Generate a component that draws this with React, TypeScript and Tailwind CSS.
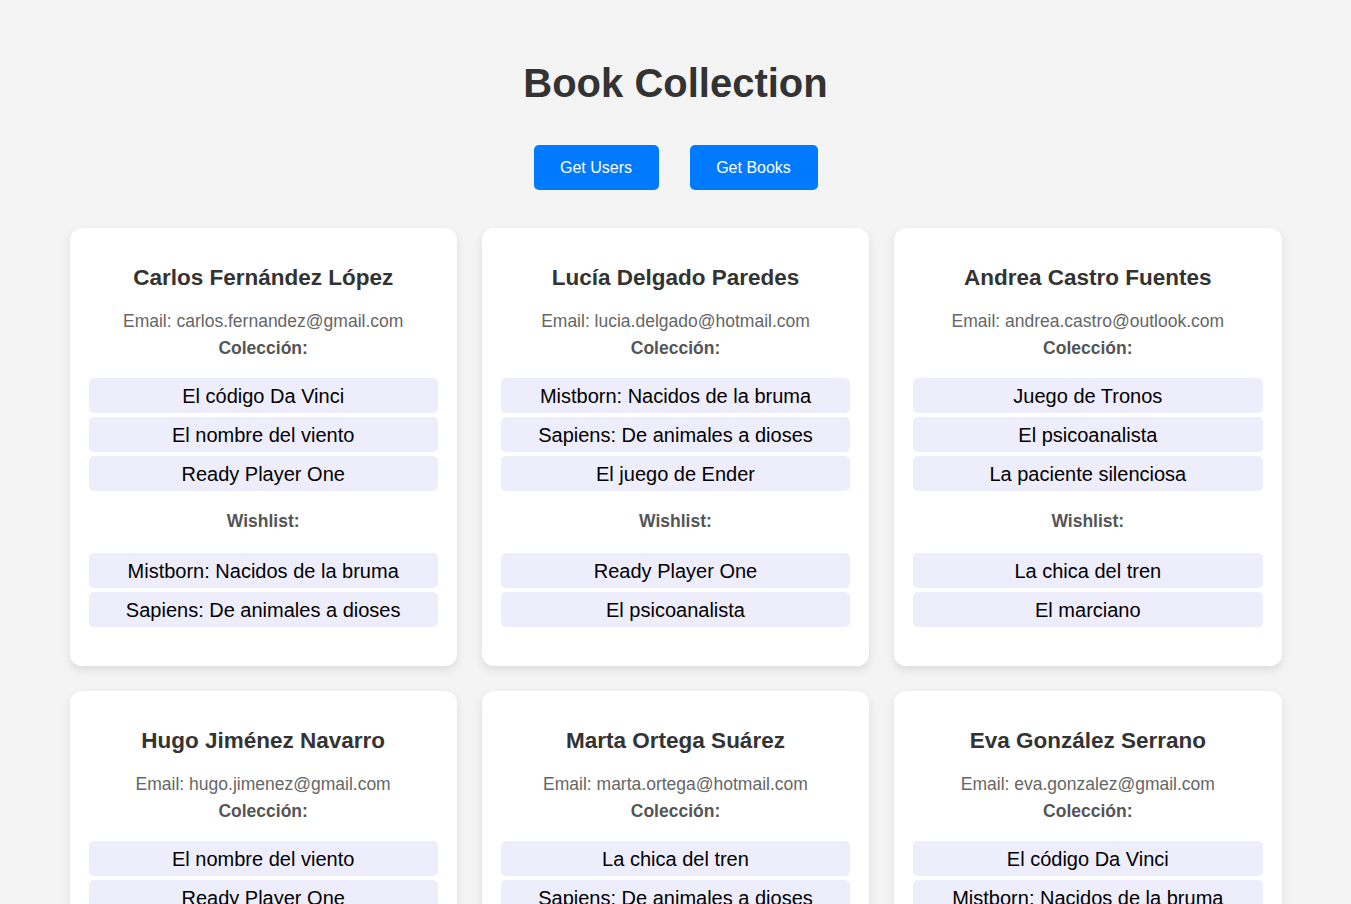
const users = [
  {
    name: "Carlos Fernández López",
    email: "carlos.fernandez@gmail.com",
    collection: ["El código Da Vinci", "El nombre del viento", "Ready Player One"],
    wishlist: ["Mistborn: Nacidos de la bruma", "Sapiens: De animales a dioses"],
  },
  {
    name: "Lucía Delgado Paredes",
    email: "lucia.delgado@hotmail.com",
    collection: ["Mistborn: Nacidos de la bruma", "Sapiens: De animales a dioses", "El juego de Ender"],
    wishlist: ["Ready Player One", "El psicoanalista"],
  },
  {
    name: "Andrea Castro Fuentes",
    email: "andrea.castro@outlook.com",
    collection: ["Juego de Tronos", "El psicoanalista", "La paciente silenciosa"],
    wishlist: ["La chica del tren", "El marciano"],
  },
  {
    name: "Hugo Jiménez Navarro",
    email: "hugo.jimenez@gmail.com",
    collection: ["El nombre del viento", "Ready Player One", "El marciano"],
    wishlist: ["Juego de Tronos", "El juego de Ender"],
  },
  {
    name: "Marta Ortega Suárez",
    email: "marta.ortega@hotmail.com",
    collection: ["La chica del tren", "Sapiens: De animales a dioses", "El código Da Vinci"],
    wishlist: ["La paciente silenciosa", "El nombre del viento"],
  },
  {
    name: "Eva González Serrano",
    email: "eva.gonzalez@gmail.com",
    collection: ["El código Da Vinci", "Mistborn: Nacidos de la bruma", "El psicoanalista"],
    wishlist: ["Ready Player One", "La chica del tren"],
  },
];

const BookList = ({ books }: { books: string[] }) => (
  <ul className="flex flex-col gap-[4px]">
    {books.map((b) => (
      <li
        key={b}
        className="h-[35px] flex items-center justify-center rounded-[5px] bg-[#eeedfc] text-[20px] text-black"
      >
        {b}
      </li>
    ))}
  </ul>
);

const UserCard = ({ user }: { user: (typeof users)[number] }) => (
  <div className="bg-white rounded-[12px] shadow-[0_4px_10px_rgba(0,0,0,0.1)] px-[19px] pt-[37px] pb-[39px] text-center">
    <h2 className="text-[22.5px] leading-[26px] font-bold text-[#333]">{user.name}</h2>
    <p className="mt-[20px] text-[17.5px] leading-[20px] text-[#666]">Email: {user.email}</p>
    <p className="mt-[7px] text-[17.5px] leading-[20px] font-bold text-[#555]">Colección:</p>
    <div className="mt-[20px]">
      <BookList books={user.collection} />
    </div>
    <p className="mt-[20px] text-[17.5px] leading-[20px] font-bold text-[#555]">Wishlist:</p>
    <div className="mt-[22px]">
      <BookList books={user.wishlist} />
    </div>
  </div>
);

export default function App() {
  return (
    <div className="min-h-screen bg-[#f4f4f4] font-['Liberation_Sans',Arial,sans-serif] pt-[60px] pb-[40px]">
      <h1 className="text-center text-[40px] leading-[46px] font-bold text-[#333]">Book Collection</h1>

      <div className="mt-[39px] flex justify-center gap-[31px]">
        <button className="h-[45px] w-[125px] rounded-[5px] bg-[#007bff] text-white text-[16px]">Get Users</button>
        <button className="h-[45px] w-[128px] rounded-[5px] bg-[#007bff] text-white text-[16px]">Get Books</button>
      </div>

      <div className="mt-[38px] mx-auto w-[1212px] grid grid-cols-3 gap-[25px]">
        {users.map((u) => (
          <UserCard key={u.email} user={u} />
        ))}
      </div>
    </div>
  );
}
